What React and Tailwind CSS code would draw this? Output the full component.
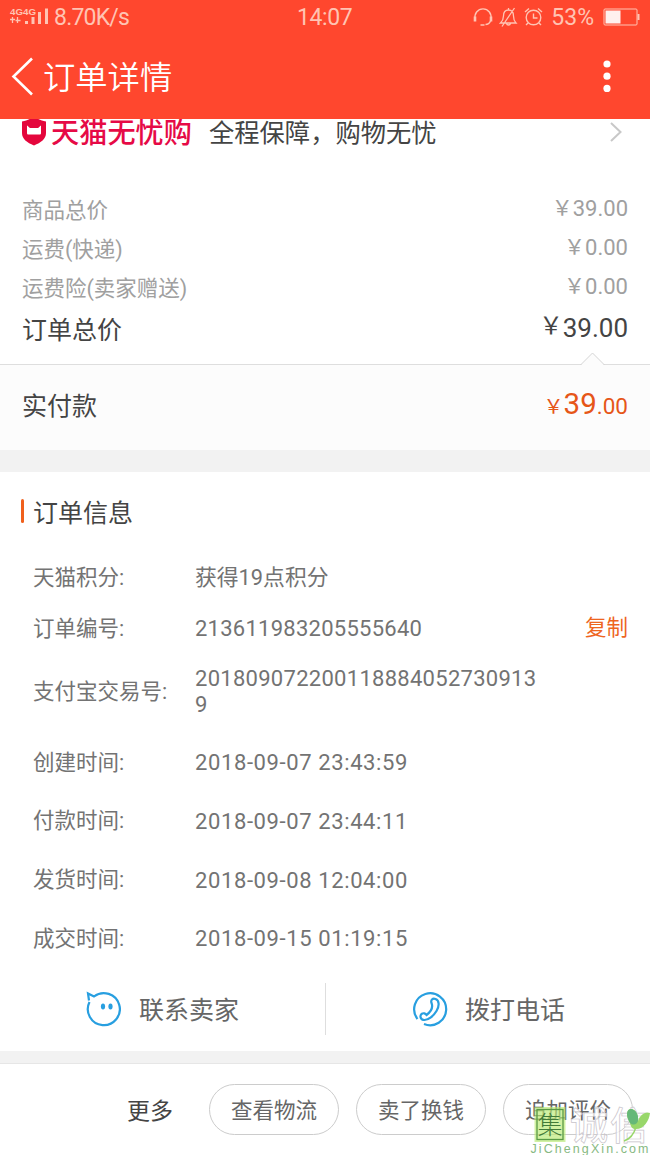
import React from 'react';

const prices = [
  { label: '商品总价', value: '39.00' },
  { label: '运费(快递)', value: '0.00' },
  { label: '运费险(卖家赠送)', value: '0.00' },
];

const times = [
  { label: '创建时间:', value: '2018-09-07 23:43:59' },
  { label: '付款时间:', value: '2018-09-07 23:44:11' },
  { label: '发货时间:', value: '2018-09-08 12:04:00' },
  { label: '成交时间:', value: '2018-09-15 01:19:15' },
];

const StatusBar = () => (
  <div className="relative h-[34px] flex items-center justify-between pl-[9px] pr-[10px] text-[#ffc4b3]">
    <div className="flex items-center">
      <svg width="41" height="20" viewBox="0 0 41 20" fill="currentColor">
        <text x="1" y="8" fontSize="9" fontWeight="700" fontFamily="'Liberation Sans', sans-serif" textLength="26" lengthAdjust="spacingAndGlyphs">4G4G</text>
        <path d="M3.500 10v6M1 12.500h5M8.500 10v6M6.500 13.500h5" stroke="currentColor" strokeWidth="1.300" />
        <path d="M16 14h3v3h-3zM22.500 10h3v7h-3zM29 5h3v12h-3zM36 1.500h3V17h-3z" />
      </svg>
      <span className="ml-1 text-[23px] leading-none tracking-[-0.8px]">8.70K/s</span>
    </div>
    <span className="absolute left-[297px] top-[6px] text-[23px] leading-none tracking-[-0.4px]">14:07</span>
    <div className="flex items-center">
      <svg width="20" height="20" viewBox="0 0 20 20" fill="none" stroke="currentColor" strokeWidth="1.400">
        <path d="M2.300 12a8 8 0 1 1 15.400 0M17.500 14c-1 2.500-3 3.500-5 3.500M7.500 18h4" />
        <path d="M2 9.500v5M18 9.500v5" strokeWidth="2.600" />
      </svg>
      <svg className="ml-[6px]" width="19" height="20" viewBox="0 0 19 20" fill="none" stroke="currentColor" strokeWidth="1.300">
        <path d="M1.500 16h15.500c-2-2-2.500-4-2.500-7 0-4-2-6-5-6s-5 2-5 6c0 3-1 5-3 7zM7.500 16.500c.5 2 3.500 2 4 0M9.500 3V1M3 19.500 15.500 1" />
      </svg>
      <svg className="ml-[6px]" width="19" height="20" viewBox="0 0 19 20" fill="none" stroke="currentColor" strokeWidth="1.400">
        <circle cx="9.500" cy="10.500" r="7.300" />
        <path d="M9.500 6.500v4.500h4M1 5l4-3.500M18 5l-4-3.500M4 16l-2 2M15 16l2 2" />
      </svg>
      <span className="ml-[8px] text-[23px] leading-none">53%</span>
      <svg className="ml-[9px]" width="37" height="18" viewBox="0 0 37 18" fill="none">
        <rect x="1" y="1" width="33" height="16" rx="1" stroke="#ffc4b3" />
        <rect x="2.500" y="2.500" width="15" height="13" fill="#fff0ee" />
        <path d="M35.500 6v6" stroke="#ffc4b3" strokeWidth="2" />
      </svg>
    </div>
  </div>
);

const TitleBar = () => (
  <div className="h-[85px] flex items-center pl-[11px] pr-[39px] text-white">
    <svg width="23" height="40" viewBox="0 0 23 40" fill="none" stroke="currentColor" strokeWidth="2.600">
      <path d="M21 1.500 2.500 19.500 21 37.500" />
    </svg>
    <h1 className="ml-[9px] mt-1 text-[32.300px] leading-none font-[350]">订单详情</h1>
    <svg className="ml-auto" width="8" height="34" viewBox="0 0 8 34" fill="currentColor">
      <circle cx="4" cy="4" r="3.600" />
      <circle cx="4" cy="16.200" r="3.600" />
      <circle cx="4" cy="28.400" r="3.600" />
    </svg>
  </div>
);

const InfoRow = ({ label, children }) => (
  <>
    <span className="w-[162px] shrink-0">{label}</span>
    <span className="text-[22px]">{children}</span>
  </>
);

const Watermark = () => (
  <div className="absolute left-[530px] top-[1104px] w-[120px] h-[51px]">
    <svg width="120" height="51" viewBox="0 0 120 51">
      <rect x="4.500" y="3" width="31" height="35" fill="#b9ea72" fillOpacity="0.65" />
      <rect x="7" y="5.500" width="26" height="30" fill="none" stroke="#5a9a45" strokeWidth="1.300" />
      <text x="7.500" y="30" fontSize="25" fontWeight="300" fill="#427b39" fontFamily="'Noto Sans CJK SC', sans-serif">集</text>
      <text x="40" y="35" fontSize="38" fill="#fff" fillOpacity="0.75" stroke="#c8c3ca" strokeWidth="0.700" fontWeight="500" fontFamily="'Noto Sans CJK SC', sans-serif" textLength="78">诚信</text>
      <path d="M100 19c-5-8-3-14 1-14 4 0 8 5 7 12 2-6 7-10 12-8-1 8-6 16-14 16-4 0-5-2-6-6z" fill="#98d76a" />
      <path d="M100 19c-5-8-3-14 1-14 4 0 8 5 7 12-1 3-4 5-8 2z" fill="#65b878" />
      <path d="M106 23c-2 7-6 12-12 14" fill="none" stroke="#98d76a" strokeWidth="1.500" />
      <text x="0.500" y="49" fontSize="12.500" fill="#87b982" fontFamily="'Liberation Sans', sans-serif" textLength="118">JiChengXin.com</text>
    </svg>
  </div>
);

const App = () => {
  return (
    <div className="relative w-[650px] h-[1155px] overflow-hidden bg-white font-['Roboto','Noto_Sans_CJK_SC',sans-serif] text-[#444]">
      <header className="bg-[#ff472e]">
        <StatusBar />
        <TitleBar />
      </header>

      <section className="h-[71px] overflow-hidden">
        <div className="h-[29px] flex items-center pl-[21px] pr-[27px]">
          <svg className="-mt-[3px] shrink-0" width="26" height="28" viewBox="0 0 26 28">
            <path d="M1 3.500C6 3 9 0 13 0s7 3 12 3.500V15c0 6-5 9.500-12 12.500C6 24.500 1 21 1 15z" fill="#e4063c" />
            <path d="M6 7.500c1 0 2 2.500 3 2.500h8c1 0 2-2.500 3-2.500V15c0 1-.5 1.500-1.500 1.500h-11C6.500 16.500 6 16 6 15z" fill="#fff" />
          </svg>
          <span className="ml-[4px] mt-[2px] text-[28.200px] leading-none font-medium text-[#e60a46]">天猫无忧购</span>
          <span className="ml-[17px] mt-[1px] text-[25.300px] leading-none">全程保障，购物无忧</span>
          <svg className="ml-auto -mt-[3px]" width="14" height="22" viewBox="0 0 14 22" fill="none" stroke="#c8c8c8" strokeWidth="2">
            <path d="m2 2 9.500 9L2 20" />
          </svg>
        </div>
      </section>

      <section className="h-[174px] px-[22px]">
        {prices.map((item) => (
          <div key={item.label} className="h-[39px] flex items-center justify-between text-[21.500px] leading-none text-[#a0a0a0]">
            <span className="mt-[2px]">{item.label}</span>
            <span className="-mt-[3px] flex items-center">
              <span className="text-[21px]">￥</span>
              <span className="mt-[1px] text-[22px]">{item.value}</span>
            </span>
          </div>
        ))}
        <div className="h-[43px] flex items-center justify-between text-[25px] leading-none">
          <span className="mt-[3px]">订单总价</span>
          <span className="-mt-[3px] flex items-center">
            <span className="text-[23.500px]">￥</span>
            <span className="mt-[1px] text-[26px]">39.00</span>
          </span>
        </div>
      </section>

      <section className="relative h-[86px] flex items-center justify-between px-[22px] bg-[#fcfcfc] border-t border-[#dedede]">
        <svg className="absolute left-[580px] -top-[13px]" width="25" height="14" viewBox="0 0 25 14">
          <path d="M0 14 12.500 1 25 14z" fill="#fcfcfc" />
          <path d="M.5 13 12.500 1 24.500 13" fill="none" stroke="#d4d4d4" />
        </svg>
        <span className="-mt-[3px] text-[25px] leading-none">实付款</span>
        <span className="-mt-[6px] flex items-baseline leading-none text-[#e65618]">
          <span className="text-[20px]">￥</span>
          <span className="text-[29.500px]">39</span>
          <span className="text-[22.500px]">.00</span>
        </span>
      </section>
      <div className="h-[22px] bg-[#f2f2f2]" />

      <section className="h-[579px]">
        <div className="h-[80px] flex items-center pl-[21px]">
          <span className="-mt-[2px] w-[3px] h-6 rounded-full bg-[#f0601d]" />
          <h2 className="ml-[9px] mt-[2px] text-[25px] leading-none font-normal">订单信息</h2>
        </div>
        <div className="pl-[33px] pr-[22px] text-[21.500px] leading-none text-[#737373]">
          <div className="h-[51px] flex items-center">
            <InfoRow label="天猫积分:"><span className="text-[21.800px]">获得19点积分</span></InfoRow>
          </div>
          <div className="h-[51px] flex items-center">
            <InfoRow label="订单编号:"><span className="tracking-[0.26px]">213611983205555640</span></InfoRow>
            <button className="ml-auto -mt-[2px] text-[#ee651f]">复制</button>
          </div>
          <div className="h-[75px] mb-1 flex items-center">
            <InfoRow label="支付宝交易号:">
              <span className="block w-[345px] leading-[25.500px] break-all tracking-[0.28px]">2018090722001188840527309139</span>
            </InfoRow>
          </div>
          {times.map((item) => (
            <div key={item.label} className="h-[58.700px] flex items-center">
              <InfoRow label={item.label}><span className="block mt-[2px] tracking-[0.61px]">{item.value}</span></InfoRow>
            </div>
          ))}
        </div>
        <div className="mt-[15px] h-[52px] flex text-[25px] leading-none text-[#666]">
          <div className="w-[326px] flex items-center pl-[85px] border-r border-[#dedede]">
            <svg width="36" height="36" viewBox="0 0 36 36" fill="none" stroke="#289fe0" strokeWidth="2.200">
              <path d="M4.500 11A16 16 0 1 0 9 5.500L3 2.500l1 7" />
              <ellipse cx="18" cy="15.500" rx="2.100" ry="2.900" fill="#289fe0" stroke="none" />
              <ellipse cx="25.500" cy="15.500" rx="2.100" ry="2.900" fill="#289fe0" stroke="none" />
            </svg>
            <span className="ml-[18px] mt-[4px]">联系卖家</span>
          </div>
          <div className="flex items-center pl-[86px]">
            <svg width="36" height="36" viewBox="0 0 36 36" fill="none" stroke="#289fe0" strokeWidth="2.200">
              <path d="M5.500 28A16 16 0 1 1 12 33" />
              <path d="M19.500 12c-1-3 1-5 4-4 4 1.500 4 7 1 12s-8 9-12 9c-4 0-5-4-3-6 2-1.500 4-.5 5 1 4-3 7-7 5-12z" />
            </svg>
            <span className="ml-[17px] mt-[4px]">拨打电话</span>
          </div>
        </div>
      </section>

      <div className="h-[13px] bg-[#f2f2f2] border-b border-[#e6e6e6]" />

      <footer className="h-[91px] flex items-center justify-end gap-[17px] pr-[17px] text-[21.500px] leading-none text-[#666]">
        <span className="mr-[19px] mt-[3px] text-[23px] text-[#444]">更多</span>
        <button className="w-[130px] h-[51px] pt-[2px] rounded-full border border-[#ccc]">查看物流</button>
        <button className="w-[130px] h-[51px] pt-[2px] rounded-full border border-[#ccc]">卖了换钱</button>
        <button className="w-[130px] h-[51px] pt-[2px] rounded-full border border-[#ccc]">追加评价</button>
      </footer>

      <Watermark />
    </div>
  );
};

export default App;
